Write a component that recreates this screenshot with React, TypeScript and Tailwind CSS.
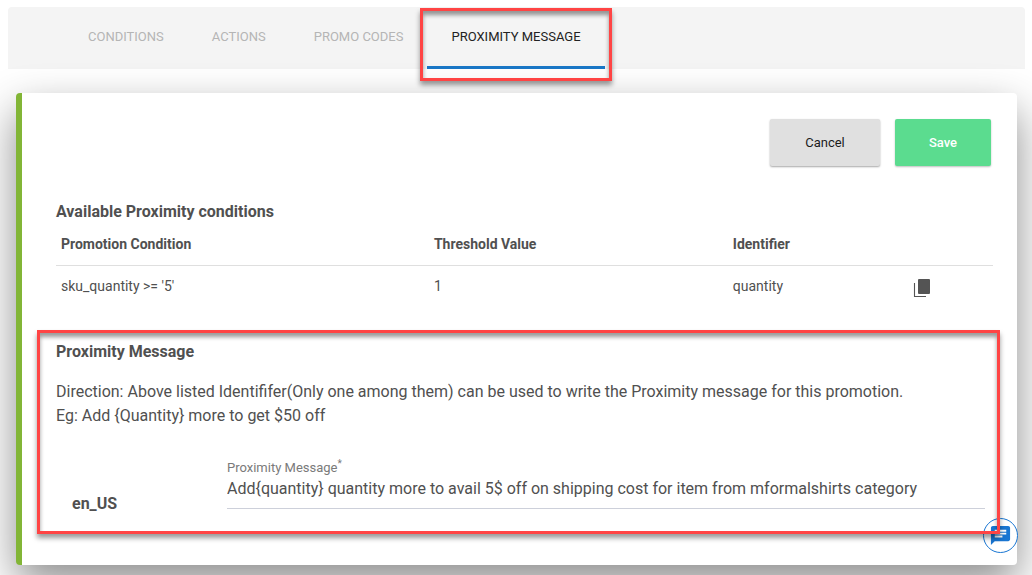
import React, { useState } from "react";
import { MdChat } from "react-icons/md";

const tabs = ["CONDITIONS", "ACTIONS", "PROMO CODES", "PROXIMITY MESSAGE"];

const conditions = [
  { condition: "sku_quantity >= '5'", threshold: "1", identifier: "quantity" },
];

function Highlight({ className }: { className: string }) {
  return (
    <span
      aria-hidden="true"
      className={`pointer-events-none absolute z-20 border-3 border-[#ff4444] shadow-[0_4px_5px_rgba(0,0,0,0.4),inset_0_4px_4px_rgba(0,0,0,0.4)] ${className}`}
    />
  );
}

function CopyIcon() {
  return (
    <svg width="18" height="20" viewBox="0 0 18 20" aria-hidden="true">
      <path d="M1.5 5v13.5H13" fill="none" stroke="#545454" strokeWidth="1.1" />
      <rect x="5" y="1" width="12" height="15" rx="1" fill="#545454" />
    </svg>
  );
}

function TabBar() {
  return (
    <nav className="mx-2 mr-[7px] flex h-[62px] rounded-t bg-[#f4f4f4] pl-14">
      {tabs.map((tab) => {
        const active = tab === "PROXIMITY MESSAGE";
        return (
          <a
            key={tab}
            href="#"
            aria-current={active ? "page" : undefined}
            className={`relative border-b-3 px-6 pt-5 text-[13px] leading-5 whitespace-nowrap ${
              active ? "border-[#1976c5] text-[#222222]" : "border-transparent text-[#b5b5b5]"
            }`}
          >
            {tab}
            {active && <Highlight className="-left-[7px] -right-[7px] top-px -bottom-[15px]" />}
          </a>
        );
      })}
    </nav>
  );
}

export default function App() {
  const [message, setMessage] = useState(
    "Add{quantity} quantity more to avail 5$ off on shipping cost for item from mformalshirts category",
  );

  return (
    <div className="overflow-x-clip bg-white pt-[7px] pb-[10px] font-['Roboto',sans-serif] text-[#505050]">
      <TabBar />
      <main className="mt-6 mr-[15px] ml-4 rounded border-l-6 border-[#82b536] bg-white pt-[26px] pr-6 pb-[31px] pl-[34px] shadow-[0_18px_44px_rgba(0,0,0,0.45)]">
        <div className="flex justify-end gap-[15px] pr-0.5">
          <button
            type="button"
            className="h-[47px] w-[110px] rounded-xs bg-[#e0e0e0] text-[13px] text-[#1c1c1c] shadow-[0_1px_2px_rgba(0,0,0,0.35)]"
          >
            Cancel
          </button>
          <button
            type="button"
            className="h-[47px] w-24 rounded-xs bg-[#5bdc8f] text-[13px] font-medium text-white shadow-[0_1px_2px_rgba(0,0,0,0.25)]"
          >
            Save
          </button>
        </div>

        <h2 className="mt-[34px] text-base leading-6 font-bold">Available Proximity conditions</h2>
        <table className="w-full table-fixed text-left text-sm">
          <thead>
            <tr className="h-[41px] border-b border-[#dfdfdf]">
              <th scope="col" className="w-[39.8%] pl-[5px] font-bold">Promotion Condition</th>
              <th scope="col" className="w-[31.9%] pl-[5px] font-bold">Threshold Value</th>
              <th scope="col" className="w-[19.3%] pl-[5px] font-bold">Identifier</th>
              <th scope="col" className="pl-[5px]" aria-label="Copy" />
            </tr>
          </thead>
          <tbody>
            {conditions.map((row) => (
              <tr key={row.identifier} className="h-[41px]">
                <td className="pl-[5px]">{row.condition}</td>
                <td className="pl-[5px]">{row.threshold}</td>
                <td className="pl-[5px]">{row.identifier}</td>
                <td className="pt-1 pl-1">
                  <button type="button" aria-label="Copy identifier" className="block">
                    <CopyIcon />
                  </button>
                </td>
              </tr>
            ))}
          </tbody>
        </table>

        <section className="relative mt-6 pt-[10px] pb-[25px]">
          <Highlight className="top-0 bottom-0 -left-[19px] -right-[7px]" />
          <h2 className="text-base leading-6 font-bold">Proximity Message</h2>
          <p className="mt-4 text-base leading-6">
            Direction: Above listed Identififer(Only one among them) can be used to write the Proximity message for this
            promotion.
            <br />
            Eg: Add {"{Quantity}"} more to get $50 off
          </p>
          <div className="mt-8 flex items-end pr-2 pl-4">
            <span className="w-[155px] shrink-0 text-base leading-[10px] font-bold">en_US</span>
            <div className="flex min-w-0 grow flex-col">
              <label htmlFor="message" className="text-[13px] leading-4 text-[#7a7a7a]">
                Proximity Message<sup className="text-[10px]">*</sup>
              </label>
              <input
                id="message"
                required
                value={message}
                onChange={(event) => setMessage(event.target.value)}
                className="h-[33px] w-full border-b border-[#cdd0da] bg-transparent pb-[7px] text-base outline-none"
              />
            </div>
          </div>
        </section>
      </main>

      <button
        type="button"
        aria-label="Open chat"
        className="fixed right-[14px] bottom-[22px] z-10 flex size-[35px] items-center justify-center rounded-full border border-[#1976d2] bg-white text-[#1976d2]"
      >
        <MdChat size={23} aria-hidden="true" />
      </button>
    </div>
  );
}
